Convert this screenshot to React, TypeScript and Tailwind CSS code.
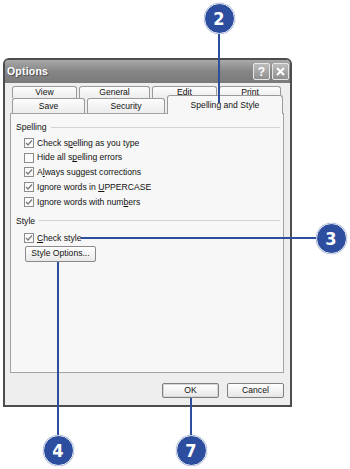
import React from "react";

const font = { fontFamily: '"Liberation Sans", Arial, sans-serif' };

function U({ children }: { children: React.ReactNode }) {
  return <span className="underline underline-offset-1">{children}</span>;
}

function Check({ checked, children }: { checked: boolean; children: React.ReactNode }) {
  return (
    <div className="flex items-center h-[14.75px] pl-[13px] gap-[3px]">
      <div className="w-[10px] h-[10px] border border-[#8c8c8c] bg-[#fbfbfb] flex items-center justify-center">
        {checked && (
          <svg width="8" height="8" viewBox="0 0 8 8">
            <path d="M1 4 L3 6 L7 1.5" fill="none" stroke="#7a7a7a" strokeWidth="1.3" />
          </svg>
        )}
      </div>
      <span className="text-[8.6px] leading-none text-[#111]">{children}</span>
    </div>
  );
}

function Tab({ w, label, selected }: { w: number; label: string; selected?: boolean }) {
  return (
    <div
      style={{ width: w }}
      className={
        selected
          ? "h-[19px] -mt-[3px] -mb-[1px] relative z-10 bg-[#f7f7f7] border border-b-0 border-[#9a9a9a] rounded-t-[3px] flex items-start justify-center pt-[3px] text-[8.6px] text-[#111]"
          : "h-full bg-gradient-to-b from-[#fdfdfd] to-[#ececec] border border-b-0 border-[#9a9a9a] rounded-t-[3px] flex items-center justify-center text-[8.6px] text-[#111]"
      }
    >
      {label}
    </div>
  );
}

function Callout({ n, x, y }: { n: string; x: number; y: number }) {
  return (
    <div
      className="absolute w-[31px] h-[31px] rounded-full bg-[#2d4e9e] border border-[#e8ecf5] shadow-[0_0_1px_#6a7fb5] flex items-center justify-center text-white font-bold text-[18px] z-30"
      style={{ left: x - 15.5, top: y - 15.5, fontFamily: '"Liberation Sans Narrow", "DejaVu Sans Condensed", "Liberation Sans", sans-serif' }}
    >
      {n}
    </div>
  );
}

export default function App() {
  return (
    <div className="relative w-[350px] h-[469px] bg-white overflow-hidden" style={font}>
      {/* Dialog */}
      <div className="ml-[3px] mt-[58px] w-[289px] h-[349px] border-2 border-[#4d4d4d] rounded-t-[6px] bg-[#eeeeee] flex flex-col">
        {/* title bar */}
        <div className="h-[23px] bg-gradient-to-b from-[#a9a9a9] via-[#858585] to-[#7a7a7a] rounded-t-[4px] flex items-center pl-[2px] pr-[1px]">
          <span className="text-white font-bold text-[10.5px] tracking-[0.2px] [text-shadow:1px_1px_0_#555]">Options</span>
          <div className="ml-auto flex gap-[2px]">
            <div className="w-[17px] h-[17px] rounded-[2px] border border-[#e6e6e6] bg-gradient-to-b from-[#bdbdbd] to-[#8f8f8f] flex items-center justify-center text-white font-bold text-[12px] leading-none">
              ?
            </div>
            <div className="w-[17px] h-[17px] rounded-[2px] border border-[#e6e6e6] bg-gradient-to-b from-[#bdbdbd] to-[#8f8f8f] flex items-center justify-center">
              <svg width="11" height="11" viewBox="0 0 11 11">
                <path d="M2 2 L9 9 M9 2 L2 9" stroke="white" strokeWidth="2" />
              </svg>
            </div>
          </div>
        </div>

        {/* tabs */}
        <div className="mt-[3px] ml-[7px] flex gap-[2px] h-[12px]">
          <Tab w={65} label="View" />
          <Tab w={71} label="General" />
          <Tab w={65} label="Edit" />
          <Tab w={62} label="Print" />
        </div>
        <div className="ml-[7px] flex gap-[2px] h-[15px] items-end">
          <Tab w={73} label="Save" />
          <Tab w={78} label="Security" />
          <Tab w={116} label="Spelling and Style" selected />
        </div>

        {/* panel */}
        <div className="ml-[5px] w-[274px] h-[260px] border border-[#a3a3a3] bg-[#f7f7f7] pt-[7px] flex flex-col">
          <div className="flex items-center h-[12px] pl-[5px] pr-[3px] gap-[4px]">
            <span className="text-[8.6px] text-[#111] leading-none">Spelling</span>
            <div className="flex-1 h-px bg-[#d2d2d2]" />
          </div>
          <div className="mt-[2.6px] flex flex-col">
            <Check checked>
              Check s<U>p</U>elling as you type
            </Check>
            <Check checked={false}>
              Hide all s<U>p</U>elling errors
            </Check>
            <Check checked>
              A<U>l</U>ways suggest corrections
            </Check>
            <Check checked>
              Ignore words in <U>U</U>PPERCASE
            </Check>
            <Check checked>
              Ignore words with num<U>b</U>ers
            </Check>
          </div>
          <div className="mt-[5.6px] flex items-center h-[12px] pl-[5px] pr-[3px] gap-[4px]">
            <span className="text-[8.6px] text-[#111] leading-none">Style</span>
            <div className="flex-1 h-px bg-[#d2d2d2]" />
          </div>
          <div className="mt-[3.6px]">
            <Check checked>
              <U>C</U>heck style
            </Check>
          </div>
          <div className="mt-[0.6px] ml-[14px] w-[71px] h-[16px] border border-[#8a8a8a] rounded-[2px] bg-gradient-to-b from-[#ffffff] to-[#e9e9e9] flex items-center justify-center text-[8.6px] text-[#111]">
            Style Options...
          </div>
        </div>

        {/* buttons */}
        <div className="ml-[5px] w-[274px] mt-[10px] flex justify-end gap-[8px]">
          <div className="w-[57px] h-[15px] border border-[#7f7f7f] rounded-[2px] bg-gradient-to-b from-[#ffffff] to-[#e6e6e6] shadow-[inset_0_0_0_1px_#d6d6d6] flex items-center justify-center text-[8.6px] text-[#111]">
            OK
          </div>
          <div className="w-[57px] h-[15px] border border-[#7f7f7f] rounded-[2px] bg-gradient-to-b from-[#ffffff] to-[#e6e6e6] flex items-center justify-center text-[8.6px] text-[#111]">
            Cancel
          </div>
        </div>
      </div>

      {/* callout lines */}
      <div className="absolute left-[218px] top-[30px] w-[2px] h-[73px] bg-[#2d4e9e] z-20" />
      <div className="absolute left-[81px] top-[237px] w-[238px] h-[2px] bg-[#2d4e9e] z-20" />
      <div className="absolute left-[57px] top-[262px] w-[2px] h-[175px] bg-[#2d4e9e] z-20" />
      <div className="absolute left-[190px] top-[398px] w-[2px] h-[38px] bg-[#2d4e9e] z-20" />

      <Callout n="2" x={219} y={18} />
      <Callout n="3" x={331} y={238} />
      <Callout n="4" x={58} y={450} />
      <Callout n="7" x={191} y={450} />
    </div>
  );
}
